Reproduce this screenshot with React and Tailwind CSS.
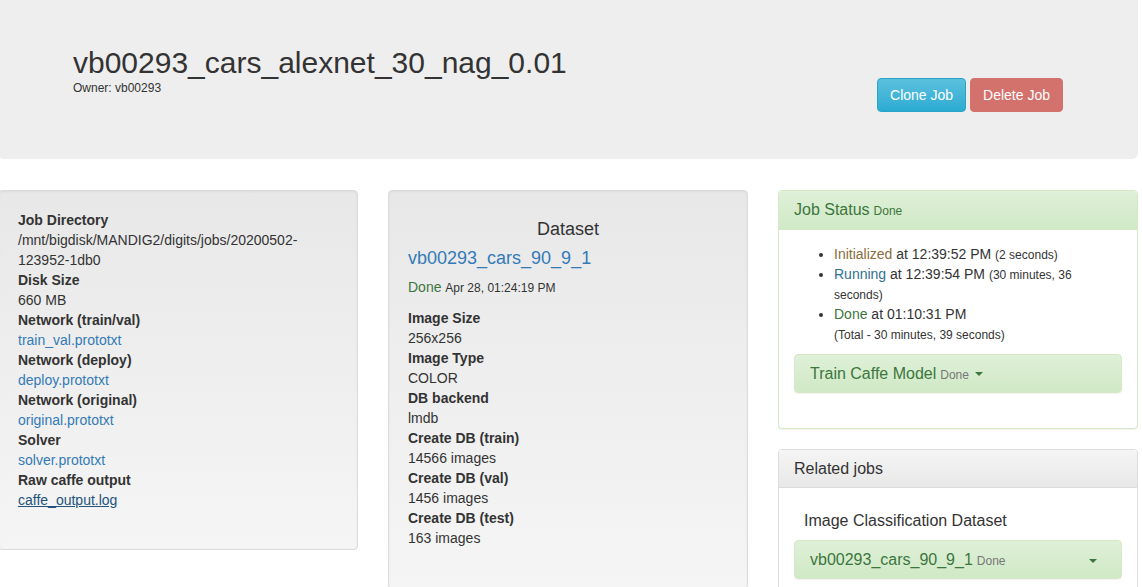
import React from 'react';

const well =
    'rounded-[4px] border border-[#dcdcdc] bg-gradient-to-b from-[#e8e8e8] to-[#f5f5f5] shadow-[inset_0_1px_3px_rgba(0,0,0,0.05),0_1px_0_rgba(255,255,255,0.1)] p-[19px]';

const Caret = () => (
    <span className="inline-block ml-[6px] align-middle w-0 h-0 border-l-[4px] border-r-[4px] border-t-[4px] border-l-transparent border-r-transparent border-t-[#3c763d]" />
);

const Field = ({ label, children }) => (
    <>
        <dt className="font-bold">{label}</dt>
        <dd>{children}</dd>
    </>
);

const A = ({ children, under }) => (
    <a href="#" className={under ? 'text-[#23527c] underline' : 'text-[#337ab7]'}>
        {children}
    </a>
);

const GreenBox = ({ children, right }) => (
    <div className="flex items-center rounded-[4px] border border-[#d6e9c6] bg-gradient-to-b from-[#dff0d8] to-[#d0e9c6] shadow-[0_1px_1px_rgba(0,0,0,0.05)] px-[15px] h-[39px] text-[#3c763d]">
        {children}
        {right}
    </div>
);

export default function App() {
    return (
        <div className="min-h-screen bg-white text-[#333] text-[14px] leading-[20px] font-['Liberation_Sans',Arial,sans-serif] overflow-hidden">
            <div className="ml-[-2px] w-[1140px]">
                {/* header */}
                <div className="h-[159px] bg-[#eee] rounded-b-[6px] flex items-start justify-between px-[75px]">
                    <div className="pt-[46px]">
                        <h1 className="text-[30px] leading-[33px]">vb00293_cars_alexnet_30_nag_0.01</h1>
                        <div className="text-[12px] leading-[17px] mt-[1px]">Owner: vb00293</div>
                    </div>
                    <div className="flex gap-[4px] mt-[78px]">
                        <button className="h-[34px] px-[12px] rounded-[4px] border border-[#28a4c9] bg-gradient-to-b from-[#5bc0de] to-[#2aabd2] text-white">
                            Clone Job
                        </button>
                        <button className="h-[34px] px-[12px] rounded-[4px] border border-[#d3716d] bg-[#d3716d] text-white">
                            Delete Job
                        </button>
                    </div>
                </div>

                <div className="grid grid-cols-3 gap-[30px] mt-[31px]">
                    {/* left */}
                    <div>
                        <div className={well}>
                            <dl className="mb-[20px]">
                                <Field label="Job Directory">/mnt/bigdisk/MANDIG2/digits/jobs/20200502-123952-1db0</Field>
                                <Field label="Disk Size">660 MB</Field>
                                <Field label="Network (train/val)"><A>train_val.prototxt</A></Field>
                                <Field label="Network (deploy)"><A>deploy.prototxt</A></Field>
                                <Field label="Network (original)"><A>original.prototxt</A></Field>
                                <Field label="Solver"><A>solver.prototxt</A></Field>
                                <Field label="Raw caffe output"><A under>caffe_output.log</A></Field>
                            </dl>
                        </div>
                    </div>

                    {/* middle */}
                    <div>
                        <div className={`${well} pb-[40px]`}>
                            <h4 className="text-[18px] leading-[20px] mt-[9px] text-center">Dataset</h4>
                            <h4 className="text-[18px] leading-[20px] mt-[9px]"><A>vb00293_cars_90_9_1</A></h4>
                            <div className="mt-[9px]">
                                <span className="text-[#3c763d]">Done</span>{' '}
                                <span className="text-[12px]">Apr 28, 01:24:19 PM</span>
                            </div>
                            <dl className="mt-[10px]">
                                <Field label="Image Size">256x256</Field>
                                <Field label="Image Type">COLOR</Field>
                                <Field label="DB backend">lmdb</Field>
                                <Field label="Create DB (train)">14566 images</Field>
                                <Field label="Create DB (val)">1456 images</Field>
                                <Field label="Create DB (test)">163 images</Field>
                            </dl>
                        </div>
                    </div>

                    {/* right */}
                    <div>
                        <div className="rounded-[4px] border border-[#d6e9c6] bg-white shadow-[0_1px_1px_rgba(0,0,0,0.05)]">
                            <div className="h-[39px] flex items-center px-[15px] rounded-t-[3px] border-b border-[#d6e9c6] bg-gradient-to-b from-[#dff0d8] to-[#d0e9c6] text-[#3c763d]">
                                <span className="text-[16px]">Job Status</span>
                                <span className="text-[12px] ml-[4px] mt-[2px]">Done</span>
                            </div>
                            <div className="p-[15px]">
                                <ul className="list-disc pl-[40px] mt-[-1px] mb-[10px]">
                                    <li>
                                        <span className="text-[#8a6d3b]">Initialized</span> at 12:39:52 PM{' '}
                                        <span className="text-[12px] leading-[14px]">(2 seconds)</span>
                                    </li>
                                    <li>
                                        <span className="text-[#31708f]">Running</span> at 12:39:54 PM{' '}
                                        <span className="text-[12px] leading-[14px]">(30 minutes, 36 seconds)</span>
                                    </li>
                                    <li>
                                        <span className="text-[#3c763d]">Done</span> at 01:10:31 PM
                                        <br />
                                        <span className="text-[12px] leading-[14px]">(Total - 30 minutes, 39 seconds)</span>
                                    </li>
                                </ul>
                                <GreenBox>
                                    <span className="text-[16px]">Train Caffe Model</span>
                                    <span className="text-[12px] text-[#777] ml-[4px] mt-[2px]">Done</span>
                                    <Caret />
                                </GreenBox>
                                <div className="h-[20px]" />
                            </div>
                        </div>

                        <div className="mt-[20px] rounded-[4px] border border-[#ddd] bg-white shadow-[0_1px_1px_rgba(0,0,0,0.05)]">
                            <div className="h-[38px] flex items-center px-[15px] rounded-t-[3px] border-b border-[#ddd] bg-gradient-to-b from-[#f5f5f5] to-[#e8e8e8]">
                                <span className="text-[16px]">Related jobs</span>
                            </div>
                            <div className="p-[15px]">
                                <h4 className="text-[16px] leading-[18px] mt-[9px] mb-[10px] pl-[10px]">Image Classification Dataset</h4>
                                <GreenBox right={<span className="ml-auto mr-[9px]"><Caret /></span>}>
                                    <span className="text-[16px]">vb00293_cars_90_9_1</span>
                                    <span className="text-[12px] text-[#777] ml-[4px] mt-[2px]">Done</span>
                                </GreenBox>
                            </div>
                        </div>
                    </div>
                </div>
            </div>
        </div>
    );
}
